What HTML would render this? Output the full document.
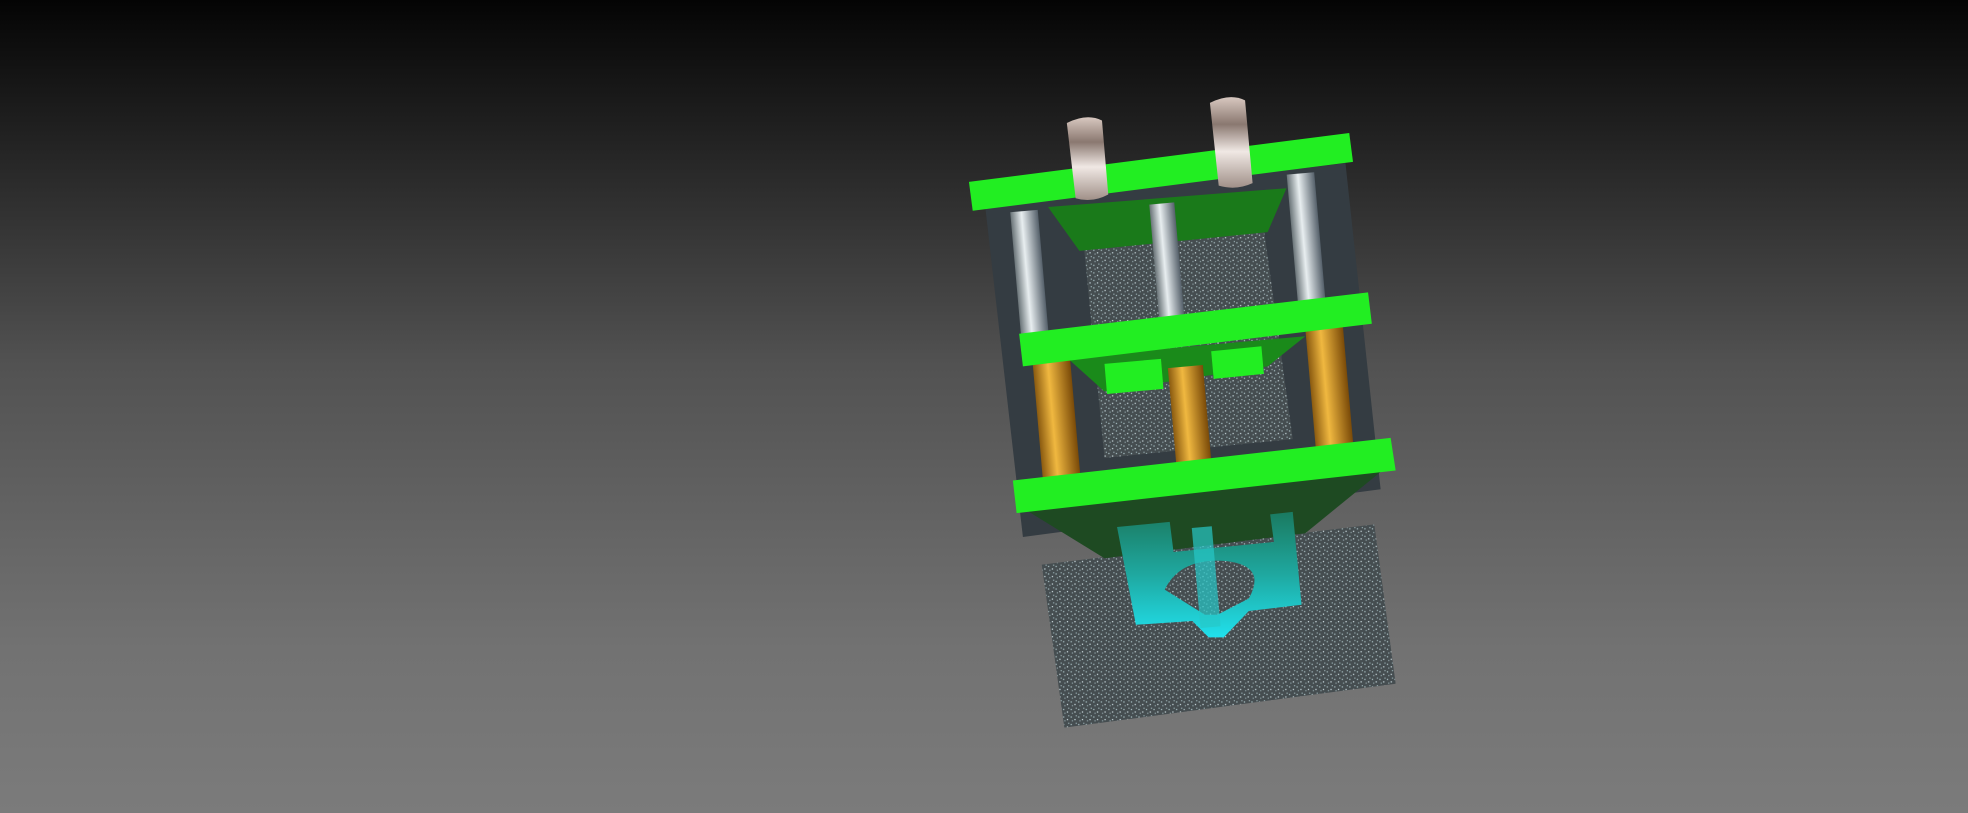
<!DOCTYPE html>
<html><head><style>html,body{margin:0;padding:0;width:1968px;height:813px;overflow:hidden;background:#000}</style></head>
<body>
<svg width="1968" height="813" viewBox="0 0 1568 648" preserveAspectRatio="none" xmlns="http://www.w3.org/2000/svg">
<defs>
<linearGradient id="bg" x1="0" y1="0" x2="0" y2="1">
<stop offset="0" stop-color="#040404"/><stop offset="0.1" stop-color="#161616"/><stop offset="0.45" stop-color="#525252"/><stop offset="0.8" stop-color="#727272"/><stop offset="1" stop-color="#7b7b7b"/></linearGradient>
<linearGradient id="sil" x1="0" y1="0" x2="1" y2="0"><stop offset="0" stop-color="#6a7478"/><stop offset="0.4" stop-color="#e8eef0"/><stop offset="1" stop-color="#55606a"/></linearGradient>
<linearGradient id="gold" x1="0" y1="0" x2="1" y2="0"><stop offset="0" stop-color="#8a5a10"/><stop offset="0.4" stop-color="#f0b840"/><stop offset="1" stop-color="#7a4a08"/></linearGradient>
<linearGradient id="hook" x1="0" y1="0" x2="0" y2="1"><stop offset="0" stop-color="#d8c8c0"/><stop offset="0.3" stop-color="#8a7870"/><stop offset="0.6" stop-color="#f0e8e4"/><stop offset="1" stop-color="#a09088"/></linearGradient>
<linearGradient id="cy" x1="0" y1="0" x2="0" y2="1"><stop offset="0" stop-color="#1a7a60"/><stop offset="0.5" stop-color="#1fa8a0"/><stop offset="1" stop-color="#20e0ec"/></linearGradient>
<pattern id="spk" width="6" height="6" patternUnits="userSpaceOnUse"><rect width="6" height="6" fill="#454d50"/><rect x="1" y="1" width="1" height="1" fill="#a8bec2"/><rect x="4" y="3" width="1" height="1" fill="#c8d8dc"/><rect x="2" y="4" width="1" height="1" fill="#8a9ca0"/><rect x="5" y="0" width="1" height="1" fill="#90a4a8"/></pattern>
</defs>
<rect width="1568" height="648" fill="url(#bg)"/>
<polygon points="830,450 1095,418 1112,545 848,580" fill="url(#spk)"/>
<polygon points="785,165 1072,130 1100,390 815,428" fill="#343c42"/>
<polygon points="862,180 1005,168 1030,350 880,365" fill="url(#spk)"/>
<polygon points="815,405 1105,372 1040,425 880,445" fill="#1e4a22"/>
<polygon points="835,165 1025,150 1010,185 860,200" fill="#1a7a1a"/>
<polygon points="850,285 1040,268 1010,292 880,312" fill="#1a8a1a"/>
<polygon points="880,290 925,286 927,310 882,314" fill="#22ee22"/>
<polygon points="965,280 1005,276 1007,298 967,302" fill="#22ee22"/>
<rect x="810" y="168" width="22" height="118" fill="url(#sil)" transform="rotate(-5 821 227)"/>
<rect x="920" y="162" width="20" height="100" fill="url(#sil)" transform="rotate(-5 930 212)"/>
<rect x="1030" y="138" width="22" height="112" fill="url(#sil)" transform="rotate(-5 1041 194)"/>
<rect x="827" y="288" width="30" height="98" fill="url(#gold)" transform="rotate(-5 842 337)"/>
<rect x="934" y="292" width="28" height="82" fill="url(#gold)" transform="rotate(-5 948 333)"/>
<rect x="1044" y="256" width="30" height="102" fill="url(#gold)" transform="rotate(-5 1059 307)"/>
<polygon points="772,145 1075,106 1078,129 775,168" fill="#22ee22"/>
<polygon points="812,266 1090,233 1093,258 815,292" fill="#22ee22"/>
<polygon points="807,383 1108,349 1112,375 810,409" fill="#22ee22"/>
<path d="M890,420 L932,416 L935,440 L1015,432 L1012,410 L1030,408 L1037,482 L995,487 L975,508 L963,508 L950,495 L905,498 Z M928,470 Q940,445 975,447 Q1010,450 995,477 L970,490 L960,490 Z" fill="url(#cy)" fill-rule="evenodd"/>
<rect x="953" y="420" width="16" height="80" fill="#26c8c8" opacity="0.7" transform="rotate(-5 961 460)"/>
<path d="M850,98 Q866,90 878,96 L883,155 Q870,162 857,158 Z" fill="url(#hook)"/>
<path d="M964,82 Q980,74 992,80 L998,146 Q985,152 971,148 Z" fill="url(#hook)"/>
</svg>
</body></html>
